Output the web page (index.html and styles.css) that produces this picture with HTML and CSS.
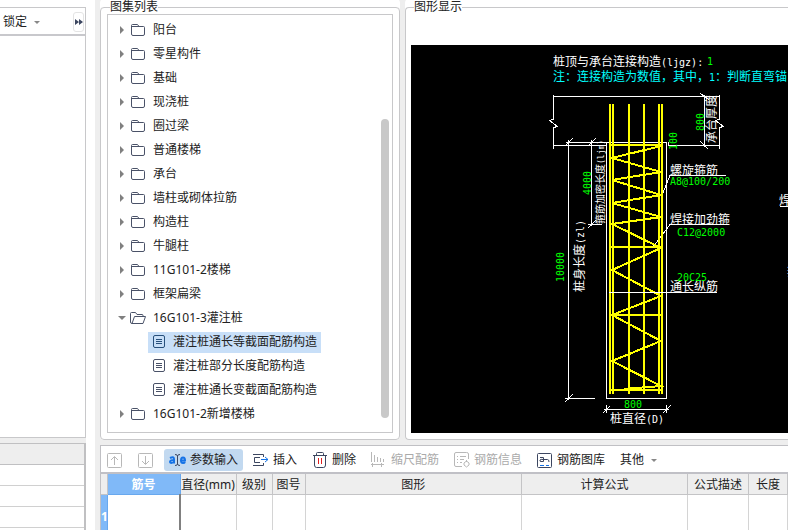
FILE: index.html
```html
<!DOCTYPE html>
<html lang="zh-CN">
<head>
<meta charset="utf-8">
<title>参数输入</title>
<link rel="stylesheet" href="styles.css">
</head>
<body>
<svg class="defs" aria-hidden="true">
  <symbol id="folder" viewBox="0 0 16 16"><path d="M1.500 3.500V12q0 1.500 1.500 1.500H13q1.500 0 1.500-1.500V5.500q0-1-1-1H9L7.500 2.500H2.500q-1 0-1 1M1.500 4.500H9"/></symbol>
  <symbol id="folder-open" viewBox="0 0 16 16"><path d="M2 13.500Q.500 13.500.500 12V3.500q0-1 1-1H5.500L7 4.500H12q1 0 1 1V6.500M2 13.500L4.500 6.500H15.500L13 13.500Z"/></symbol>
  <symbol id="doc" viewBox="0 0 14 14"><rect x="1.500" y=".5" width="11" height="12" rx="1.500"/><path d="M4 4.500H10M4 6.500H10M4 8.500H10"/></symbol>
</svg>
<div class="app">
  <aside class="side">
    <section class="side-top">
      <div class="lock-bar">
        <button class="lock">锁定<i class="caret"></i></button>
        <button class="more" aria-label="更多"><svg width="8" height="6" viewBox="0 0 8 6"><path d="M0 0L4 3L0 6ZM4 0L8 3L4 6Z"/></svg></button>
      </div>
    </section>
    <section class="side-bottom">
      <table class="side-table">
        <thead><tr><th></th></tr></thead>
        <tbody><tr><td></td></tr><tr><td></td></tr><tr><td></td></tr><tr><td></td></tr></tbody>
      </table>
    </section>
  </aside>
  <main class="main">
    <div class="upper">
      <fieldset class="group list-group">
        <legend>图集列表</legend>
        <div class="tree-box">
          <ul class="tree">
            <li><i class="arrow"></i><svg class="icon"><use href="#folder"/></svg><span>阳台</span></li>
            <li><i class="arrow"></i><svg class="icon"><use href="#folder"/></svg><span>零星构件</span></li>
            <li><i class="arrow"></i><svg class="icon"><use href="#folder"/></svg><span>基础</span></li>
            <li><i class="arrow"></i><svg class="icon"><use href="#folder"/></svg><span>现浇桩</span></li>
            <li><i class="arrow"></i><svg class="icon"><use href="#folder"/></svg><span>圈过梁</span></li>
            <li><i class="arrow"></i><svg class="icon"><use href="#folder"/></svg><span>普通楼梯</span></li>
            <li><i class="arrow"></i><svg class="icon"><use href="#folder"/></svg><span>承台</span></li>
            <li><i class="arrow"></i><svg class="icon"><use href="#folder"/></svg><span>墙柱或砌体拉筋</span></li>
            <li><i class="arrow"></i><svg class="icon"><use href="#folder"/></svg><span>构造柱</span></li>
            <li><i class="arrow"></i><svg class="icon"><use href="#folder"/></svg><span>牛腿柱</span></li>
            <li><i class="arrow"></i><svg class="icon"><use href="#folder"/></svg><span>11G101-2楼梯</span></li>
            <li><i class="arrow"></i><svg class="icon"><use href="#folder"/></svg><span>框架扁梁</span></li>
            <li><i class="arrow open"></i><svg class="icon"><use href="#folder-open"/></svg><span>16G101-3灌注桩</span></li>
            <li class="leaf"><a class="selected" href="#"><svg class="doc"><use href="#doc"/></svg>灌注桩通长等截面配筋构造</a></li>
            <li class="leaf"><a href="#"><svg class="doc"><use href="#doc"/></svg>灌注桩部分长度配筋构造</a></li>
            <li class="leaf"><a href="#"><svg class="doc"><use href="#doc"/></svg>灌注桩通长变截面配筋构造</a></li>
            <li><i class="arrow"></i><svg class="icon"><use href="#folder"/></svg><span>16G101-2新增楼梯</span></li>
          </ul>
          <div class="track"><div class="thumb"></div></div>
        </div>
      </fieldset>
      <fieldset class="group view-group">
        <legend>图形显示</legend>
        <svg class="drawing" viewBox="411 45 377 388" preserveAspectRatio="xMinYMin slice">
          <g class="w">
            <path d="M553.500 95V119L549.500 120.500L557.500 126.500L553.500 127.500V149M553 96.500H720M719.500 95V119L715.500 120.500L723.500 126.500L719.500 127.500V149M553 145.500H606M668 145.500H720M668.500 142V146"/>
            <path d="M704.500 95V147M700 93L709 100M700 141L708 149"/>
            <path d="M566 142.500H606M568.500 140V400M565 146L573 138M565 402L573 394M565 398.500H595"/>
            <path d="M591.500 140V226M588 146L596 138M588 228L596 220M588 224.500H602"/>
            <path d="M606.500 142.500H666.500V398.500H606.500Z"/>
            <path d="M604 409.500H669M606.500 405V413M666.500 405V413M603 413L610 406M663 413L671 405"/>
            <path d="M662 195L670 175.500H726M653 247L670 224.500H729M780 206.500H788"/>
          </g>
          <path class="y" d="M610 104V394M613 104V394M629 104V394M644 104V394M659 104V394M662 104V394M610 145H662M610 247H662M610 315H662M610 390H662"/>
          <path class="y" d="M661 146L612 158L661 172L612 180L661 195L612 203L661 217L612 224L661 248L612 270L661 296L612 315L661 341L612 361L661 386L624 389"/>
          <path class="w" d="M609 292.500H717"/>
          <g class="white">
            <text x="553" y="66">桩顶与承台连接构造<tspan class="m">(ljgz):</tspan></text>
            <text x="670" y="175">螺旋箍筋</text>
            <text x="670" y="224">焊接加劲箍</text>
            <text x="670" y="291">通长纵筋</text>
            <text x="779" y="205">焊</text>
            <text x="787" y="276">箍</text>
            <text x="610" y="423">桩直径<tspan class="m">(D)</tspan></text>
            <text transform="translate(716 143) rotate(-90)">承台厚度</text>
            <text transform="translate(584 292) rotate(-90)">桩身长度<tspan class="m">(zl)</tspan></text>
            <text class="small" transform="translate(604 224) rotate(-90)">箍筋加密长度<tspan class="ms">(ljm)</tspan></text>
          </g>
          <text class="cyan" x="553" y="81">注：连接构造为数值，其中，<tspan class="m">1</tspan>：判断直弯锚</text>
          <g class="green m">
            <text x="707" y="65">1</text>
            <text x="670" y="185">A8@100/200</text>
            <text x="677" y="236">C12@2000</text>
            <text x="677" y="281">20C25</text>
            <text x="624" y="408">800</text>
            <text transform="translate(704 131) rotate(-90)">800</text>
            <text transform="translate(677 150) rotate(-90)">100</text>
            <text transform="translate(591 195) rotate(-90)">4000</text>
            <text transform="translate(564 282) rotate(-90)">10000</text>
          </g>
        </svg>
      </fieldset>
    </div>
    <section class="lower">
      <div class="toolbar">
        <button class="arrow-btn" disabled aria-label="上移"><svg width="15" height="15" viewBox="0 0 15 15"><rect x=".5" y=".5" width="14" height="14" rx="1"/><path d="M7.500 12V4M4 7L7.500 3.500L11 7"/></svg></button>
        <button class="arrow-btn" disabled aria-label="下移"><svg width="15" height="15" viewBox="0 0 15 15"><rect x=".5" y=".5" width="14" height="14" rx="1"/><path d="M7.500 3V11M4 8L7.500 11.500L11 8"/></svg></button>
        <button class="active"><svg class="ae" width="17" height="14" viewBox="0 0 17 14"><path class="blue" d="M1 5Q5 3 5 6V10.500M5 7Q1 7 1 9Q1.500 11 5 9M12 7.500H16Q16 4.500 14 4.500Q12 4.500 12 7.500Q12 10 14 10Q15.500 10 16 9"/><path d="M6 1.500Q8.500 1.500 8.500 3V11Q8.500 12.500 6 12.500M11 1.500Q8.500 1.500 8.500 3M11 12.500Q8.500 12.500 8.500 11"/></svg>参数输入</button>
        <button><svg width="16" height="14" viewBox="0 0 16 14"><path d="M0 1.500H10.500V4M0 12.500H10.500V10M7 4.500H1.500V9.500H7"/><path class="blue" d="M8 6.500H15M12 4L15 6.500L12 9"/></svg>插入</button>
        <button><svg width="16" height="16" viewBox="-1 0 16 16"><path d="M0 3.500H14M3.500 3V1.500Q3.500.500 4.500.500H9.500Q10.500.500 10.500 1.500V3M1.500 4V13Q1.500 15.500 3.500 15.500H10.500Q12.500 15.500 12.500 13V4"/><path class="red" d="M5.500 6V12M8.500 6V12"/></svg>删除</button>
        <button disabled><svg width="16" height="16" viewBox="0 0 16 16"><path d="M.500 0V10M3.500 3V10M6.500 5V10M9.500 6V10M12.500 7V10M0 12.500H13M1.500 11V15M10.500 11V15"/></svg>缩尺配筋</button>
        <button disabled><svg width="16" height="16" viewBox="0 0 16 16"><path d="M8 14.500H2Q.500 14.500.500 13V2Q.500.500 2 .500H12.500Q14.500.500 14.500 2V7M3 4.500H4M6 4.500H12M3 7.500H4M6 7.500H10M3 10.500H4M6 10.500H8M12.500 8V10M10 11L12.500 9L15 11M10 11V13L12.500 15L15 13V11"/></svg>钢筋信息</button>
        <button><svg width="16" height="15" viewBox="0 0 16 15"><rect x=".5" y=".5" width="14" height="14" rx="1"/><path d="M3 4.500H6.500V8.500H4Q2.500 8.500 3 7Q3.500 6 6.500 6.500H10.500Q12 6.500 12 9"/><path class="blue" d="M3 12.500H7M9 12.500H12"/></svg>钢筋图库</button>
        <button>其他<i class="caret"></i></button>
      </div>
      <table class="grid">
        <colgroup><col class="c0"><col class="c1"><col class="c2"><col class="c3"><col class="c4"><col class="c5"><col class="c6"><col class="c7"><col class="c8"></colgroup>
        <thead><tr><th></th><th class="cur">筋号</th><th>直径(mm)</th><th>级别</th><th>图号</th><th>图形</th><th>计算公式</th><th>公式描述</th><th>长度</th></tr></thead>
        <tbody><tr><th class="cur">1</th><td class="focus"></td><td></td><td></td><td></td><td></td><td></td><td></td><td></td></tr></tbody>
      </table>
    </section>
  </main>
</div>
</body>
</html>
```
FILE: styles.css
```css
* { box-sizing: border-box; }
body {
  margin: 0;
  background: #fff;
  color: #222;
  font: 12px/16px "Noto Sans", "Noto Sans CJK SC", sans-serif;
  overflow: hidden;
}
button {
  font: inherit;
  color: inherit;
  border: 0;
  background: none;
  padding: 0;
  display: flex;
  align-items: center;
  white-space: nowrap;
}
table { border-collapse: collapse; table-layout: fixed; width: 100%; }
.defs { position: absolute; width: 0; height: 0; }
.app { display: flex; height: 100vh; }

.side { width: 86px; flex: none; display: flex; flex-direction: column; padding-top: 7px; }
.side-top { flex: 1; border: 1px solid #c8c8ca; border-left: 0; }
.lock-bar {
  display: flex;
  justify-content: space-between;
  align-items: center;
  height: 28px;
  padding: 2px 1px 0 3px;
  border-bottom: 2px solid #c8c8cc;
}
.caret {
  border: 3px solid transparent;
  border-top-color: #888;
  border-bottom: 0;
  margin-left: 7px;
}
.more { width: 11px; height: 20px; justify-content: center; border: 1px solid #e4e4e4; border-radius: 3px; }
.more svg { fill: #3c4660; flex: none; }
.side-bottom { height: 92px; flex: none; overflow: hidden; border-top: 5px solid #eee; }
.side-table { border-top: 1px solid #c0c0c2; border-right: 2px solid #c0c0c2; }
.side-table th { height: 21px; background: #eee; border-bottom: 1px solid #c0c0c2; padding: 0; }
.side-table td { height: 21px; border-bottom: 1px solid #d0d0d0; padding: 0; }

.main {
  flex: 1;
  min-width: 0;
  margin-left: 9px;
  padding-left: 5px;
  background: #eee;
  display: flex;
  flex-direction: column;
}
.upper { flex: 1; min-height: 0; display: flex; gap: 5px; }
.group {
  margin: 0;
  padding: 0 6px 6px 6px;
  border: 1px solid #c8c8ca;
  border-radius: 4px;
  min-width: 0;
  background: #fff;
  box-shadow: 0 -8px 0 #fff;
  display: flex;
  flex-direction: column;
}
.group legend { padding: 0; margin-left: 3px; height: 14px; line-height: 14px; }
.list-group { width: 300px; flex: none; }
.view-group { flex: 1; padding: 31px 0 6px 5px; border-right: 0; border-radius: 4px 0 0 4px; }
.tree-box { border: 1px solid #c8c8ca; height: 100%; display: flex; justify-content: space-between; }
.tree { list-style: none; margin: 0; padding: 3px 0 0 9px; }
.tree li { display: flex; align-items: center; height: 24px; }
.arrow { flex: none; border: 4px solid transparent; border-left-color: #808080; border-right: 0; margin: 0 6px 0 3px; }
.arrow.open { border: 4px solid transparent; border-top-color: #808080; border-bottom: 0; margin: 0 4px 0 1px; }
.icon, .doc { width: 16px; height: 16px; margin: 0 7px 0 0; fill: none; stroke: #4a5268; flex: none; }
.leaf { padding-left: 31px; }
.leaf a { display: flex; align-items: center; height: 21px; padding: 0 4px; color: inherit; text-decoration: none; white-space: nowrap; }
.leaf .selected { background: #c8dff8; }
.leaf .doc { width: 14px; height: 14px; }
.selected .doc { stroke: #28507c; }
.track { width: 8px; margin-right: 3px; display: flex; flex-direction: column; padding: 104px 0 14px; }
.thumb { flex: 1; border-radius: 4px; background: #c8c8c8; }

.drawing { display: block; width: 100%; flex: 1; min-height: 0; background: #000; font-size: 12px; }
.w { fill: none; stroke: #fff; stroke-width: 1; shape-rendering: crispEdges; }
.y { fill: none; stroke: #ff0; stroke-width: 2; shape-rendering: crispEdges; }
.white { fill: #fff; }
.cyan { fill: #0ff; }
.green { fill: #0f0; }
.m { font-family: "DejaVu Sans Mono", monospace; font-size: 10px; }
.small { font-size: 10px; }
.ms { font-family: "DejaVu Sans Mono", monospace; font-size: 8px; }

.lower { margin-top: 5px; height: 85px; flex: none; border: 1px solid #c0c0c4; border-width: 1px 0 0 1px; background: #fff; overflow: hidden; }
.toolbar { display: flex; align-items: center; height: 28px; gap: 5px; padding: 2px 0 0 1px; border-bottom: 2px solid #c0c0c6; }
.toolbar button { height: 22px; padding: 0 5px; border-radius: 3px; }
.toolbar svg { flex: none; margin-right: 4px; fill: none; stroke: #3c4660; }
.toolbar .arrow-btn { width: 26px; }
.toolbar .arrow-btn svg { margin: 0; }
.toolbar .active { background: #c2d9f0; }
.toolbar :disabled { color: #aaa; }
.toolbar :disabled svg { stroke: #b8b8b8; }
.toolbar .blue { stroke: #1673e6; }
.toolbar .ae .blue { stroke-width: 2; }
.toolbar .red { stroke: #e02020; }

.grid th { height: 20px; padding: 2px 0 0; font-weight: 400; white-space: nowrap; background: #eee; border: 1px solid #c4c4c6; border-top: 0; }
.grid td { height: 44px; border: 1px solid #d4d4d4; padding: 0; }
.grid th:first-child { border-left: 0; }
.grid .cur { background: #80b9f8; color: #fff; font-weight: 700; border-color: #68a8ee; }
.grid .focus { border-right: 2px solid #808080; }
.c0 { width: 6px; }
.c1 { width: 73px; }
.c2 { width: 56px; }
.c3 { width: 36px; }
.c4 { width: 33px; }
.c6 { width: 166px; }
.c7 { width: 61px; }
.c8 { width: 39px; }
```
